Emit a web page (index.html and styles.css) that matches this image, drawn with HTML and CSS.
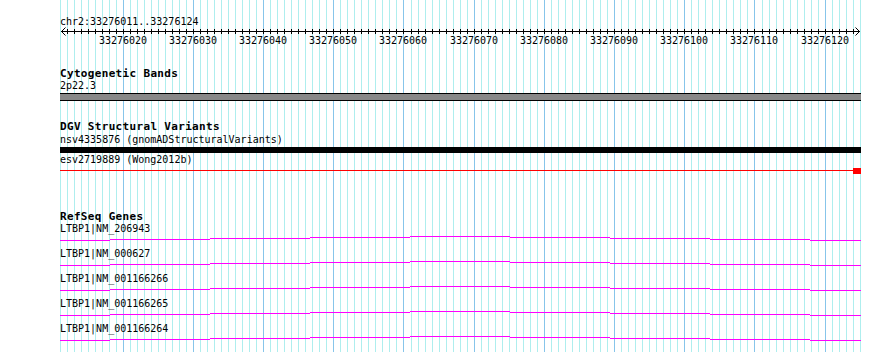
FILE: index.html
```html
<!DOCTYPE html>
<html>
  <head>
    <meta charset="UTF-8" />
    <title>Genome View</title>
    <link rel="stylesheet" href="styles.css">
  </head>

  <body>
    <div class="view">
      <svg class="grid" id="grid" width="801" height="352"></svg>

      <div class="ruler">
        <svg id="ruler" width="801" height="50">
          <text class="ruler-title" x="0" y="25">chr2:33276011..33276124</text>
          <rect x="1" y="31" width="799" height="1" />
          <path class="arrow" d="M5.5 27.5 L1.5 31.5 L5.5 35.5" />
          <path class="arrow" d="M795.5 27.5 L799.5 31.5 L795.5 35.5" />
        </svg>
      </div>

      <div class="track cyto">
        <div class="track-label">Cytogenetic Bands</div>
        <div class="feature-label">2p22.3</div>
        <div class="band"></div>
      </div>

      <div class="track dgv">
        <div class="track-label">DGV Structural Variants</div>
        <div class="feature-label">nsv4335876 (gnomADStructuralVariants)</div>
        <div class="sv-bar"></div>
        <div class="feature-label">esv2719889 (Wong2012b)</div>
        <svg class="sv-feature" width="801" height="10">
          <rect x="0" y="4" width="793" height="1" />
          <rect x="793" y="2" width="8" height="6" />
        </svg>
      </div>

      <div class="track refseq">
        <div class="track-label">RefSeq Genes</div>
        <div id="genes"></div>
      </div>
    </div>

    <script>
      const NS = "http://www.w3.org/2000/svg";
      const start = 33276011;
      const bases = 114;
      const bpPx = 7.02;

      const grid = document.getElementById("grid");
      const ruler = document.getElementById("ruler");
      const genes = document.getElementById("genes");

      function rect(parent, x, y, w, h, cls) {
        const r = document.createElementNS(NS, "rect");
        r.setAttribute("x", x);
        r.setAttribute("y", y);
        r.setAttribute("width", w);
        r.setAttribute("height", h);
        if (cls) r.setAttribute("class", cls);
        parent.appendChild(r);
      }

      for (let i = 0; i <= bases; i++) {
        const x = Math.floor(i * bpPx);
        const major = (start + i) % 10 === 0;
        rect(grid, x, 0, 1, 352, major ? "major" : "minor");
        if (i > 0 && i < bases) rect(ruler, x, 29, 1, 5, "tick");
        if (major) {
          const t = document.createElementNS(NS, "text");
          t.setAttribute("x", x);
          t.setAttribute("y", 44);
          t.setAttribute("class", "ruler-num");
          t.textContent = start + i;
          ruler.appendChild(t);
        }
      }

      // intron hat, drawn as flat steps
      const steps = [
        [0, 50, 5], [50, 150, 4], [150, 250, 3], [250, 350, 2], [350, 450, 1],
        [450, 550, 2], [550, 650, 3], [650, 750, 4], [750, 801, 5],
      ];

      const transcripts = [
        "LTBP1|NM_206943",
        "LTBP1|NM_000627",
        "LTBP1|NM_001166266",
        "LTBP1|NM_001166265",
        "LTBP1|NM_001166264",
      ];

      transcripts.forEach((name) => {
        const row = document.createElement("div");
        row.className = "gene";
        const label = document.createElement("div");
        label.className = "feature-label";
        label.textContent = name;
        row.appendChild(label);

        const svg = document.createElementNS(NS, "svg");
        svg.setAttribute("width", 801);
        svg.setAttribute("height", 13);
        steps.forEach(([x0, x1, y]) => rect(svg, x0, y, x1 - x0, 1, "intron"));
        row.appendChild(svg);
        genes.appendChild(row);
      });
    </script>
  </body>
</html>
```

FILE: styles.css
```css
body {
  font-family: "DejaVu Sans Mono", monospace;
  margin: 0;
  padding: 0;
  background-color: #fff;
  color: #000;
}

svg {
  display: block;
}

.view {
  position: relative;
  width: 801px;
  height: 352px;
  padding-left: 60px;
  overflow: hidden;
}

.grid {
  position: absolute;
  left: 60px;
  top: 0;
}

.grid .minor {
  fill: #aeeeee;
}

.grid .major {
  fill: #87c5ea;
}

.ruler {
  position: relative;
  height: 50px;
}

.ruler rect {
  fill: #000;
}

.ruler text {
  font-family: "DejaVu Sans Mono", monospace;
  font-size: 10px;
  fill: #000;
}

.ruler .ruler-num {
  text-anchor: middle;
}

.ruler .arrow {
  fill: none;
  stroke: #000;
  stroke-width: 1;
}

.track {
  position: relative;
}

.track-label {
  font-size: 11px;
  font-weight: bold;
  line-height: 12px;
  letter-spacing: 0.33px;
  white-space: nowrap;
}

.feature-label {
  font-size: 10px;
  line-height: 12px;
  white-space: nowrap;
}

.cyto {
  margin-top: 18px;
}

.band {
  margin-top: 1px;
  height: 6px;
  background-color: #888;
  border-top: 1px solid #000;
  border-bottom: 1px solid #000;
}

.dgv {
  margin-top: 20px;
}

.dgv .track-label + .feature-label {
  margin-top: 1px;
}

.sv-bar {
  margin-top: 1px;
  height: 6px;
  background-color: #000;
}

.sv-bar + .feature-label {
  margin-top: 1px;
}

.sv-feature rect {
  fill: #ff0000;
}

.refseq {
  margin-top: 35px;
}

.gene .intron {
  fill: #ff00ff;
}
```
